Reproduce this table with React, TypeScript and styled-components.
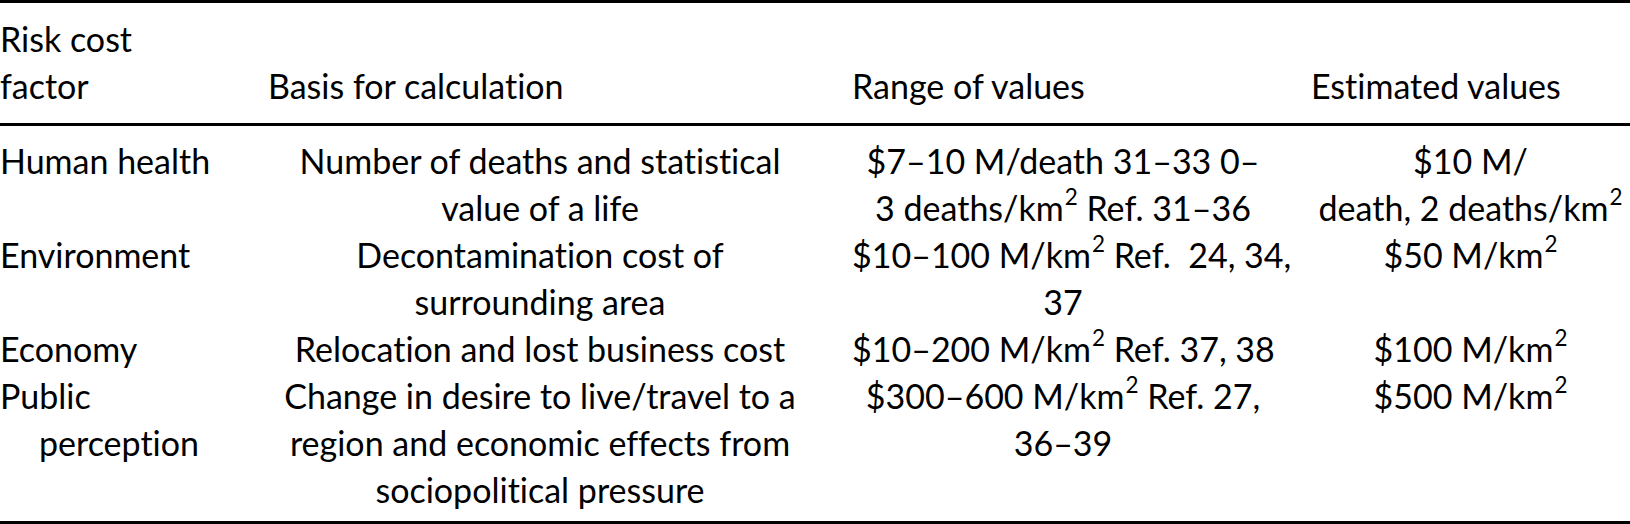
import React from "react";
import styled, { createGlobalStyle } from "styled-components";

const GlobalStyle = createGlobalStyle`
  html, body {
    margin: 0;
    padding: 0;
    background: #fff;
  }
`;

const Table = styled.table`
  width: 1630px;
  table-layout: fixed;
  border-collapse: separate;
  border-spacing: 0;
  border-top: 3px solid #000;
  border-bottom: 3px solid #000;
  font-family: Lato, "Open Sans", sans-serif;
  font-size: 34px;
  line-height: 47px;
  font-variant-ligatures: none;
  font-feature-settings: "liga" 0, "clig" 0;
  color: #000;
`;

const Head = styled.th<{ $pr: number }>`
  text-align: left;
  font-weight: 400;
  vertical-align: bottom;
  white-space: nowrap;
  padding: 12px ${(p) => p.$pr}px 14px 0;
  border-bottom: 3px solid #000;
`;

const Cell = styled.td<{ $pr: number; $center?: boolean }>`
  text-align: ${(p) => (p.$center ? "center" : "left")};
  vertical-align: top;
  white-space: nowrap;
  padding: 0 ${(p) => p.$pr}px 0 0;

  tr:first-child > & {
    padding-top: 11px;
  }
  tr:last-child > & {
    padding-bottom: 8px;
  }
`;

const Factor = styled.div`
  padding-left: 39px;
  text-indent: -39px;
  white-space: normal;
`;

const Sup = styled.sup`
  font-size: 0.66em;
  line-height: 0;
  vertical-align: 0.72em;
  margin-left: 1px;
`;

const Km2 = () => (
  <>
    M/km<Sup>2</Sup>
  </>
);

const widths = [268, 584, 459, 319];
const pads = [40, 40, 37, 0];

type Row = {
  factor: React.ReactNode;
  basis: React.ReactNode;
  range: React.ReactNode;
  estimate: React.ReactNode;
};

const rows: Row[] = [
  {
    factor: "Human health",
    basis: (
      <>
        Number of deaths and statistical
        <br />
        value of a life
      </>
    ),
    range: (
      <>
        $7–10 M/death 31–33 0–
        <br />3 deaths/km<Sup>2</Sup> Ref. 31–36
      </>
    ),
    estimate: (
      <>
        $10 M/
        <br />
        death, 2 deaths/km<Sup>2</Sup>
      </>
    ),
  },
  {
    factor: "Environment",
    basis: (
      <>
        Decontamination cost of
        <br />
        surrounding area
      </>
    ),
    range: (
      <>
        $10–100 <Km2 /> Ref.&nbsp; 24, 34,
        <br />
        37
      </>
    ),
    estimate: (
      <>
        $50 <Km2 />
      </>
    ),
  },
  {
    factor: "Economy",
    basis: "Relocation and lost business cost",
    range: (
      <>
        $10–200 <Km2 /> Ref. 37, 38
      </>
    ),
    estimate: (
      <>
        $100 <Km2 />
      </>
    ),
  },
  {
    factor: (
      <Factor>
        Public
        <br />
        perception
      </Factor>
    ),
    basis: (
      <>
        Change in desire to live/travel to a
        <br />
        region and economic effects from
        <br />
        sociopolitical pressure
      </>
    ),
    range: (
      <>
        $300–600 <Km2 /> Ref. 27,
        <br />
        36–39
      </>
    ),
    estimate: (
      <>
        $500 <Km2 />
      </>
    ),
  },
];

export default function App() {
  return (
    <>
      <GlobalStyle />
      <Table>
        <colgroup>
          {widths.map((w, i) => (
            <col key={i} style={{ width: w }} />
          ))}
        </colgroup>
        <thead>
          <tr>
            <Head $pr={pads[0]}>
              Risk cost
              <br />
              factor
            </Head>
            <Head $pr={pads[1]}>Basis for calculation</Head>
            <Head $pr={pads[2]}>Range of values</Head>
            <Head $pr={pads[3]}>Estimated values</Head>
          </tr>
        </thead>
        <tbody>
          {rows.map((r, i) => (
            <tr key={i}>
              <Cell $pr={pads[0]}>{r.factor}</Cell>
              <Cell $pr={pads[1]} $center>
                {r.basis}
              </Cell>
              <Cell $pr={pads[2]} $center>
                {r.range}
              </Cell>
              <Cell $pr={pads[3]} $center>
                {r.estimate}
              </Cell>
            </tr>
          ))}
        </tbody>
      </Table>
    </>
  );
}
